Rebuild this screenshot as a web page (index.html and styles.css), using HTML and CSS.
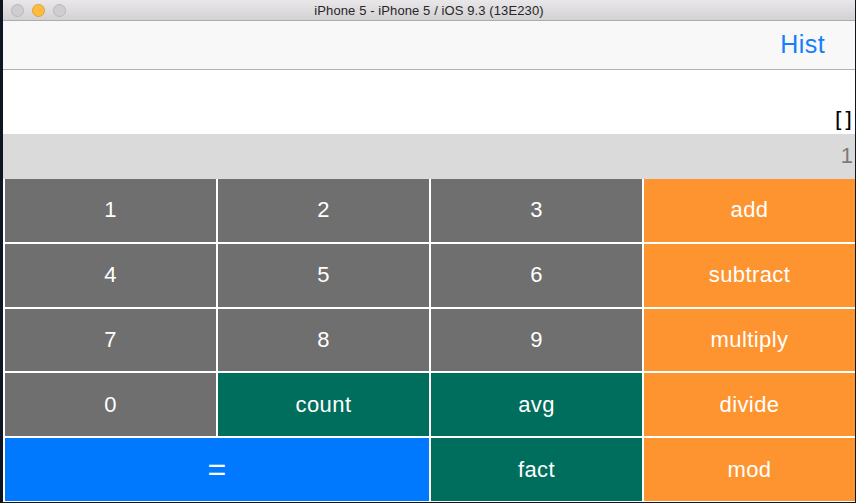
FILE: index.html
```html
<!DOCTYPE html>
<html>
<head>
<meta charset="utf-8">
<link rel="stylesheet" href="styles.css">
</head>
<body>
<div class="window">
  <div class="titlebar">
    <div class="lights">
      <span class="light"></span>
      <span class="light light-min"></span>
      <span class="light"></span>
    </div>
    <div class="title">iPhone 5 - iPhone 5 / iOS 9.3 (13E230)</div>
  </div>
  <div class="navbar">
    <span class="nav-btn">Hist</span>
  </div>
  <div class="display">
    <span class="stack">[]</span>
  </div>
  <div class="result">
    <span class="value">1</span>
  </div>
  <div class="keys">
    <div class="key num">1</div>
    <div class="key num">2</div>
    <div class="key num">3</div>
    <div class="key op">add</div>
    <div class="key num">4</div>
    <div class="key num">5</div>
    <div class="key num">6</div>
    <div class="key op">subtract</div>
    <div class="key num">7</div>
    <div class="key num">8</div>
    <div class="key num">9</div>
    <div class="key op">multiply</div>
    <div class="key num">0</div>
    <div class="key fn">count</div>
    <div class="key fn">avg</div>
    <div class="key op">divide</div>
    <div class="key eq">=</div>
    <div class="key fn">fact</div>
    <div class="key op">mod</div>
  </div>
</div>
</body>
</html>
```

FILE: styles.css
```css
html, body {
  margin: 0;
  padding: 0;
}
body {
  width: 856px;
  height: 503px;
  overflow: hidden;
  background: #0e1622;
  font-family: "Liberation Sans", Arial, sans-serif;
}
.window {
  margin-left: 3px;
  width: 852px;
  height: 502px;
  background: #ffffff;
  display: flex;
  flex-direction: column;
}
.titlebar {
  height: 20px;
  border-bottom: 1px solid #adabad;
  background: linear-gradient(#e9e7e9, #d3d1d3);
  position: relative;
  display: flex;
  align-items: center;
  justify-content: center;
}
.lights {
  position: absolute;
  left: 8px;
  top: 4px;
  display: flex;
  gap: 8px;
}
.light {
  width: 11px;
  height: 11px;
  border-radius: 50%;
  background: #cfcdcf;
  border: 0.5px solid #b9b7b9;
}
.light-min {
  background: #fdbb40;
  border-color: #e0a12e;
}
.title {
  font-size: 13px;
  color: #262626;
  letter-spacing: 0.1px;
}
.navbar {
  height: 48px;
  background: #f8f8f8;
  border-bottom: 1px solid #b1b1b1;
  display: flex;
  align-items: center;
  justify-content: flex-end;
  padding-right: 30px;
}
.nav-btn {
  color: #157efb;
  font-size: 25px;
  letter-spacing: 0.4px;
  margin-top: -2px;
}
.display {
  height: 64px;
  background: #ffffff;
  display: flex;
  align-items: flex-end;
  justify-content: flex-end;
  padding-right: 3px;
}
.stack {
  font-family: "DejaVu Sans", sans-serif;
  font-size: 22px;
  color: #000000;
  line-height: 1;
  margin-bottom: 3px;
}
.result {
  height: 45px;
  background: #dadada;
  display: flex;
  align-items: center;
  justify-content: flex-end;
  padding-right: 2px;
}
.value {
  color: #7a7a7a;
  font-size: 22px;
  margin-top: -2px;
}
.keys {
  flex: 1;
  display: grid;
  grid-template-columns: repeat(4, 1fr);
  grid-template-rows: repeat(5, 1fr);
  gap: 2px;
  padding: 0 0 1px 2px;
  background: #ffffff;
}
.key {
  display: flex;
  align-items: center;
  justify-content: center;
  color: #ffffff;
  font-size: 22px;
  letter-spacing: 0.4px;
}
.num {
  background: #6f6f6f;
}
.op {
  background: #fe9430;
}
.fn {
  background: #006e5d;
}
.eq {
  background: #0079fe;
  grid-column: span 2;
  font-size: 32px;
}
```
